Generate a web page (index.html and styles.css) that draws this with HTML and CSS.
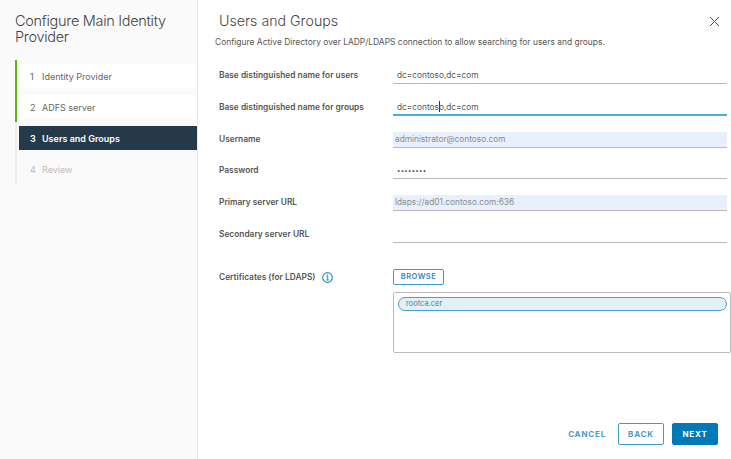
FILE: index.html
```html
<!DOCTYPE html>
<html lang="en">
<head>
<meta charset="utf-8">
<title>Configure Main Identity Provider</title>
<link rel="stylesheet" href="styles.css">
</head>
<body>
<div class="wizard">
  <aside class="side">
    <h1 class="side-title">Configure Main Identity Provider</h1>
    <ol class="steps">
      <li class="step done"><span class="num">1</span><span>Identity Provider</span></li>
      <li class="step done"><span class="num">2</span><span>ADFS server</span></li>
      <li class="step current"><span class="num">3</span><span>Users and Groups</span></li>
      <li class="step todo"><span class="num">4</span><span>Review</span></li>
    </ol>
  </aside>
  <main class="main">
    <header class="head">
      <h2 class="title">Users and Groups</h2>
      <svg class="close" width="11" height="11" viewBox="0 0 11 11"><path d="M1 1l9 9M10 1l-9 9" stroke="#565656" stroke-width="1" fill="none"/></svg>
    </header>
    <p class="desc">Configure Active Directory over LADP/LDAPS connection to allow searching for users and groups.</p>
    <div class="form">
      <div class="row"><label class="label">Base distinguished name for users</label><div class="field">dc=contoso,dc=com</div></div>
      <div class="row"><label class="label">Base distinguished name for groups</label><div class="field focus">dc=contos<span class="caret"></span>o,dc=com</div></div>
      <div class="row"><label class="label">Username</label><div class="field auto">administrator@contoso.com</div></div>
      <div class="row"><label class="label">Password</label><div class="field pass">••••••••</div></div>
      <div class="row"><label class="label">Primary server URL</label><div class="field auto">ldaps://ad01.contoso.com:636</div></div>
      <div class="row"><label class="label">Secondary server URL</label><div class="field"></div></div>
      <div class="certs">
        <div class="label cert-label">Certificates (for LDAPS)
          <svg class="info" width="11" height="11" viewBox="0 0 11 11"><circle cx="5.5" cy="5.5" r="4.8" fill="none" stroke="#2f8fc4" stroke-width="1.2"/><path d="M4.3 4.7h1.4v3M4.1 8h2.8" fill="none" stroke="#2f8fc4" stroke-width="1.1"/><circle cx="5.4" cy="3" r=".8" fill="#2f8fc4"/></svg>
        </div>
        <div class="cert-col">
          <button class="btn-browse" type="button">BROWSE</button>
          <div class="cert-box"><div class="chip">rootca.cer</div></div>
        </div>
      </div>
    </div>
    <footer class="foot">
      <button class="btn link" type="button">CANCEL</button>
      <button class="btn outline" type="button">BACK</button>
      <button class="btn primary" type="button">NEXT</button>
    </footer>
  </main>
</div>
</body>
</html>
```
FILE: styles.css
```css
* { box-sizing: border-box; }
html, body { margin: 0; height: 100%; }
body { font-family: "Inter", "Liberation Sans", sans-serif; color: #565656; background: #fff; overflow: hidden; }
.wizard { display: flex; width: 731px; height: 459px; }
.side { width: 198px; flex: none; background: #fafafa; border-right: 1px solid #e8e8e8; padding: 13px 0 0 15px; }
.side-title { margin: 0; font-size: 14.5px; line-height: 16px; font-weight: 300; color: #444; width: 175px; letter-spacing: -0.3px; }
.steps { list-style: none; margin: 15px 0 0; padding: 0; }
.step { display: flex; align-items: center; height: 31px; padding: 4px 0 3px 2px; font-size: 9px; color: #666; border-left: 2px solid #eee; }
.step .num { width: 23px; padding-left: 11px; flex: none; }
.done { border-left-color: #60b515; background: linear-gradient(#fff, #fff) content-box; }
.current { background: #25394a content-box; color: #fff; font-weight: 600; }
.todo { color: #bcbcbc; height: 32px; padding-bottom: 4px; }
.main { flex: 1; min-width: 0; padding: 13px 0 0 17px; position: relative; display: flex; flex-direction: column; }
.head { display: flex; justify-content: space-between; align-items: center; padding: 0 11px 0 4px; height: 16px; }
.title { margin: 0; font-size: 14.2px; line-height: 16px; font-weight: 300; color: #444; }
.desc { margin: 7px 0 0; font-size: 8.45px; line-height: 12px; color: #565656; }
.form { margin-top: 13px; padding-left: 4px; }
.row { display: flex; height: 31.8px; align-items: flex-start; }
.label { width: 174px; flex: none; font-size: 8.35px; font-weight: 600; color: #565656; line-height: 29px; }
.field { width: 334px; height: 22px; margin-top: 1px; border-bottom: 1px solid #b9b9b9; font-size: 8.3px; padding: 3px 0 0 4px; line-height: 21px; color: #565656; }
.focus { border-bottom: 2px solid #49afd9; }
.caret { display: inline-block; width: 1px; height: 11px; background: #333; vertical-align: -2px; margin-right: -1px; }
.auto { height: 16px; margin-top: 7px; padding: 0 0 0 2px; background: #e8f0fe; color: #8a8a8a; line-height: 15px; }
.pass { font-size: 6px; letter-spacing: 0.3px; color: #333; padding-left: 4px; }
.certs { display: flex; margin-top: 17px; }
.cert-label { line-height: 15px; display: flex; align-items: center; gap: 7px; height: 15px; margin-top: 1px; }
.info { flex: none; }
.cert-col { display: flex; flex-direction: column; align-items: flex-start; }
.btn-browse { width: 51px; height: 16px; border: 1px solid #3e9bcb; border-radius: 2px; background: #fff; color: #2f88b9; font: 600 7.5px "Inter", "Liberation Sans", sans-serif; letter-spacing: 0.5px; padding: 0; }
.cert-box { width: 338px; height: 61px; margin-top: 7px; border: 1px solid #bbb; border-radius: 2px; padding: 4px 3px 0 4px; background: #fff; }
.chip { height: 14px; border: 1px solid #49a0c8; border-radius: 7px; background: #e1f1f6; color: #4e7f98; font-size: 7.5px; line-height: 12px; padding-left: 7px; }
.foot { position: absolute; right: 13px; bottom: 14px; display: flex; gap: 8px; align-items: center; }
.btn { height: 22px; width: 46px; padding: 0; border-radius: 2px; font: 700 8px "Inter", "Liberation Sans", sans-serif; letter-spacing: 0.8px; }
.link { border: 0; background: none; color: #4a9bc9; width: auto; margin-right: 4px; }
.outline { border: 1px solid #3e9bcb; background: #fff; color: #4a9bc9; }
.primary { border: 1px solid #0079b8; background: #0079b8; color: #fff; }
```
